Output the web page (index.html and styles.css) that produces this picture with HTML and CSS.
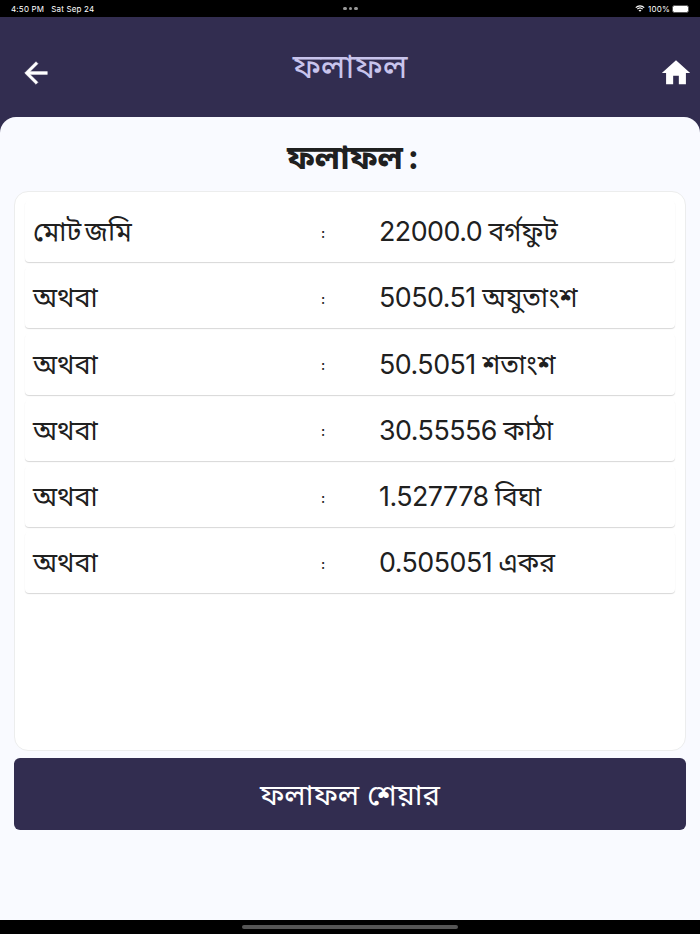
FILE: index.html
```html
<!DOCTYPE html>
<html lang="bn">
<head>
  <meta charset="UTF-8">
  <title>ফলাফল</title>
  <link rel="stylesheet" href="styles.css">
</head>
<body>

  <div class="status-bar">
    <div class="status-left"><span>4:50 PM</span><span>Sat Sep 24</span></div>
    <div class="dots"><i></i><i></i><i></i></div>
    <div class="status-right">
      <svg class="wifi" viewBox="0 0 20 15" fill="none" stroke="#fff" stroke-width="2.6">
        <path d="M1 5.5C6 .5 14 .5 19 5.5M4.2 8.9C7.5 5.6 12.5 5.6 15.8 8.9"/>
        <path d="M10 14.5L6.8 11.3Q10 8.7 13.2 11.3Z" fill="#fff" stroke="none"/>
      </svg>
      <span>100%</span>
      <div class="battery"></div>
    </div>
  </div>

  <header class="header">
    <svg viewBox="0 0 24 24"><path fill="#fff" stroke="#fff" stroke-width=".3" d="M20 11H7.83l5.59-5.59L12 4l-8 8 8 8 1.41-1.41L7.83 13H20v-2z"/></svg>
    <h1>ফলাফল</h1>
    <svg viewBox="0 0 24 24"><path fill="#fff" d="M10 20v-6h4v6h5v-8h3L12 3 2 12h3v8z"/></svg>
  </header>

  <main class="main">
    <h2>ফলাফল :</h2>
    <div class="card">
      <div class="row"><span class="label">মোট জমি</span><span class="colon">:</span><span class="value"><b>22000.0</b> বর্গফুট</span></div>
      <div class="row"><span class="label">অথবা</span><span class="colon">:</span><span class="value"><b>5050.51</b> অযুতাংশ</span></div>
      <div class="row"><span class="label">অথবা</span><span class="colon">:</span><span class="value"><b>50.5051</b> শতাংশ</span></div>
      <div class="row"><span class="label">অথবা</span><span class="colon">:</span><span class="value"><b>30.55556</b> কাঠা</span></div>
      <div class="row"><span class="label">অথবা</span><span class="colon">:</span><span class="value"><b>1.527778</b> বিঘা</span></div>
      <div class="row"><span class="label">অথবা</span><span class="colon">:</span><span class="value"><b>0.505051</b> একর</span></div>
    </div>
    <button class="share">ফলাফল শেয়ার</button>
  </main>

  <footer class="home-bar"><div></div></footer>

</body>
</html>
```
FILE: styles.css
```css
* {
  box-sizing: border-box;
}

body {
  margin: 0;
  height: 934px;
  display: flex;
  flex-direction: column;
  background-color: #322d50;
  font-family: Inter, "Noto Sans Bengali", "Noto Sans", sans-serif;
  color: #202020;
}

.status-bar {
  height: 17px;
  padding: 0 10px 0 11px;
  display: grid;
  grid-template-columns: 1fr auto 1fr;
  align-items: center;
  background-color: #000;
  color: #fff;
  font-size: 8px;
  letter-spacing: 0.18px;
}

.status-left {
  display: flex;
  gap: 7px;
}

.dots {
  display: flex;
  gap: 2px;
}

.dots i {
  width: 3.5px;
  height: 3.5px;
  border-radius: 50%;
  background-color: #999;
}

.status-right {
  display: flex;
  justify-content: flex-end;
  align-items: center;
  gap: 3px;
}

.wifi {
  width: 10px;
  height: 7px;
}

.battery {
  width: 17px;
  height: 8px;
  margin-left: -1px;
  margin-right: 1px;
  border: 1px solid #555;
  border-radius: 2.5px;
  background-color: #fff;
}

.header {
  height: 100px;
  padding: 0 7px 0 19px;
  display: flex;
  align-items: center;
  justify-content: space-between;
}

.header svg {
  width: 34px;
  height: 34px;
  margin-top: 11px;
}

.header h1 {
  margin: 3px 12px 0 0;
  font-size: 33.8px;
  font-weight: 400;
  color: #c8c4ec;
}

.main {
  flex: 1;
  padding: 0 14px;
  border-radius: 16px 16px 0 0;
  background-color: #f9faff;
}

.main h2 {
  height: 74px;
  margin: 0;
  padding-left: 6px;
  line-height: 80px;
  text-align: center;
  font-size: 33.6px;
  word-spacing: -3px;
}

.card {
  height: 560px;
  padding: 9px;
  border: 1px solid #eceded;
  border-radius: 14px;
  background-color: #fff;
}

.row {
  height: 61px;
  margin: 0 1px 5.3px;
  padding: 4px 0 0 8px;
  display: grid;
  grid-template-columns: 288px 58px 1fr;
  align-items: center;
  border-radius: 4px;
  box-shadow: 0 1px 1px #d8d8d8;
  white-space: nowrap;
}

.label {
  font-size: 27px;
  word-spacing: -4px;
}

.value {
  font-size: 26.4px;
  word-spacing: -1px;
}

.value b {
  font-size: 26.8px;
  font-weight: 400;
  letter-spacing: -0.5px;
}

.colon {
  padding-bottom: 3px;
  font-size: 14px;
  font-weight: 500;
}

.share {
  width: 100%;
  height: 72px;
  margin-top: 7px;
  padding: 6px 0 0;
  border: none;
  border-radius: 6px;
  background-color: #322d50;
  color: #fff;
  font-family: inherit;
  font-size: 29.2px;
}

.home-bar {
  height: 14px;
  display: flex;
  align-items: center;
  justify-content: center;
  background-color: #000;
}

.home-bar div {
  width: 216px;
  height: 4px;
  border-radius: 2px;
  background-color: #555;
}
```
